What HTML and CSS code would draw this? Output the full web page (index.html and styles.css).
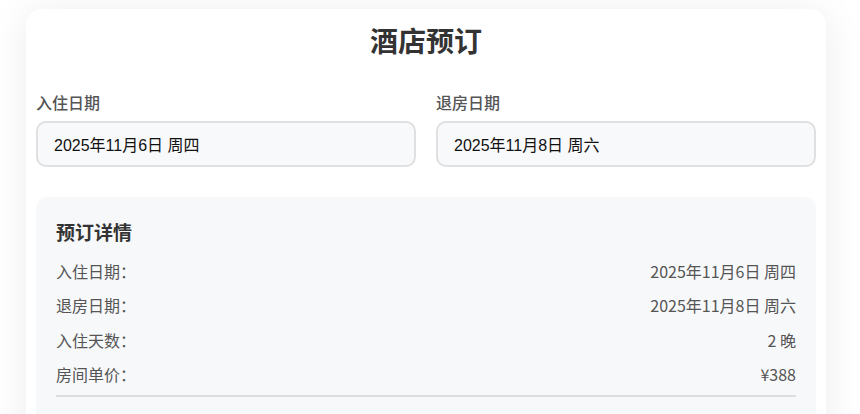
FILE: index.html
```html
<!DOCTYPE html>
<html lang="zh-CN">
<head>
<meta charset="utf-8">
<title>酒店预订</title>
<link rel="stylesheet" href="styles.css">
</head>
<body>
<div class="card">
  <h1 class="title">酒店预订</h1>
  <div class="dates">
    <div class="field">
      <label class="label">入住日期</label>
      <div class="input">2025年11月6日 周四</div>
    </div>
    <div class="field">
      <label class="label">退房日期</label>
      <div class="input">2025年11月8日 周六</div>
    </div>
  </div>
  <div class="details">
    <h2 class="details-title">预订详情</h2>
    <div class="row"><span>入住日期：</span><span>2025年11月6日 周四</span></div>
    <div class="row"><span>退房日期：</span><span>2025年11月8日 周六</span></div>
    <div class="row"><span>入住天数：</span><span>2 晚</span></div>
    <div class="row"><span>房间单价：</span><span>¥388</span></div>
    <div class="row total"><span>总价：</span><span>¥776</span></div>
  </div>
</div>
</body>
</html>
```

FILE: styles.css
```css
html, body {
  margin: 0;
  padding: 0;
  background: #ffffff;
  font-family: "Noto Sans CJK SC", "Noto Sans", sans-serif;
  color: #333;
}

body {
  padding: 9px 34px 0 26px;
}

.card {
  width: 780px;
  padding: 10px;
  background: #fff;
  border-radius: 16px;
  box-shadow: 0 4px 40px rgba(0, 0, 0, 0.08);
}

.title {
  margin: 0 0 29px;
  text-align: center;
  font-size: 28px;
  line-height: 42px;
  font-weight: 700;
  color: #333;
}

.dates {
  display: grid;
  grid-template-columns: 1fr 1fr;
  gap: 20px;
  margin-bottom: 30px;
}

.field {
  display: flex;
  flex-direction: column;
}

.label {
  font-size: 16px;
  line-height: 24px;
  color: #555;
  margin-bottom: 7px;
  font-weight: 500;
}

.input {
  box-sizing: border-box;
  height: 46px;
  padding: 0 16px;
  display: flex;
  align-items: center;
  border: 2px solid #e0e0e2;
  border-radius: 10px;
  background: #f8f9fa;
  font-family: "Liberation Sans", "Noto Sans CJK SC", sans-serif;
  font-size: 16px;
  color: #111;
}

.details {
  background: #f7f8fa;
  border-radius: 12px;
  padding: 20px;
}

.details-title {
  margin: 0 0 12px;
  font-size: 19px;
  line-height: 30px;
  font-weight: 700;
  color: #333;
}

.row {
  display: flex;
  justify-content: space-between;
  font-size: 16px;
  line-height: 24px;
  color: #555;
}

.row + .row {
  margin-top: 10.3px;
}

.row.total {
  margin-top: 9px;
  padding-top: 15px;
  border-top: 2px solid #dcdde0;
  font-size: 18px;
  font-weight: 700;
  color: #4a90d9;
}
```
